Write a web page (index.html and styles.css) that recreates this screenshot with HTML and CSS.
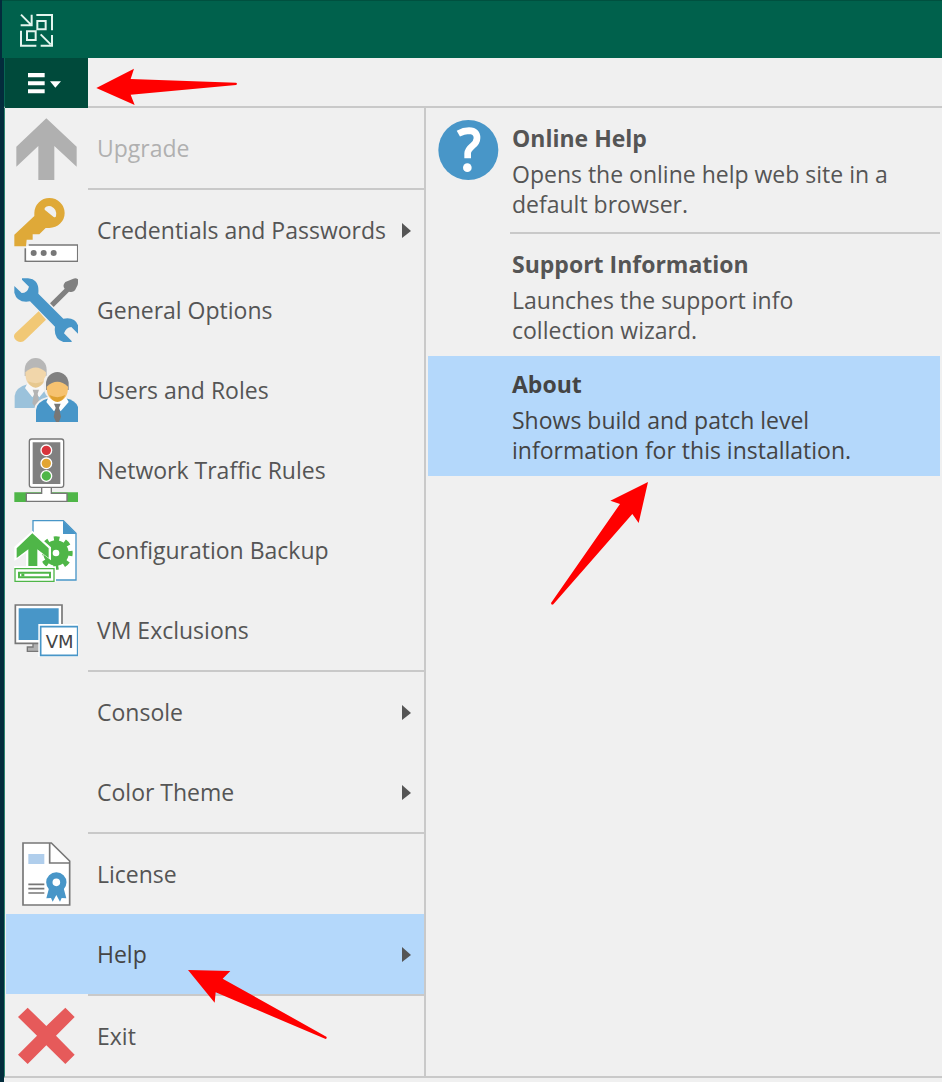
FILE: index.html
```html
<!DOCTYPE html>
<html lang="en">
<head>
  <meta charset="UTF-8">
  <meta name="viewport" content="width=device-width, initial-scale=1">
  <title>Main Menu</title>
  <link rel="stylesheet" href="styles.css">
</head>
<body>
  <div class="window">
    <header class="titlebar">
      <svg class="logo" viewBox="57 39 108 108" fill="none" stroke="#e4f5ee" stroke-width="6">
        <path d="M63 44L92 73M95 44V76H62M109 45H156V91M63 92V137H109M122 103L152 133M156 105V137H122"/>
        <path d="M112 63H137V88H112ZM81 94H107V120H81Z"/>
      </svg>
    </header>

    <div class="toolbar">
      <button class="menu-button" aria-label="Main menu">
        <svg viewBox="84 213 102 66" fill="#fff">
          <path d="M84 216H134V229H84ZM84 241H134V253H84ZM84 265H134V277H84ZM150 241H183L166 260Z"/>
        </svg>
      </button>
    </div>

    <div class="panels">
      <nav class="menu">
        <button class="item" disabled>
          <svg class="icon" viewBox="42 30 192 192"><path fill="#b0b0b0" d="M139 37L230 122V182L163 120V222H115V120L49 182V122Z"/></svg>
          <span class="label">Upgrade</span>
        </button>
        <hr>
        <button class="item">
          <svg class="icon" viewBox="42 276 192 192">
            <path fill="#dfa938" fill-rule="evenodd" d="M148 276A46 45 0 0 1 148 366H137L118 385H98V401H80L78 421H43V386L103 330V321A45 45 0 0 1 148 276ZM134 306Q141 298 153 301Q172 309 168 331Q166 336 160 332L134 311Z"/>
            <path fill="#fff" stroke="#777" stroke-width="5" d="M76 427V466H233V417H86"/>
            <path fill="#fff" d="M80 420H230V463H80Z"/>
            <g fill="#777"><circle cx="101" cy="441" r="9"/><circle cx="131" cy="441" r="9"/><circle cx="161" cy="441" r="9"/></g>
          </svg>
          <span class="label">Credentials and Passwords</span>
          <svg class="caret" viewBox="0 0 9 16"><path d="M0 1L9 9L0 16Z"/></svg>
        </button>
        <button class="item">
          <svg class="icon" viewBox="42 24 192 192">
            <path fill="#808080" d="M220 26Q229 23 236 29L233 45L225 61Q218 69 207 65L161 111L150 100L194 56Q186 47 196 36Z"/>
            <path fill="#f1c875" d="M116 124L138 149L76 209Q63 222 48 211Q37 200 46 190Z"/>
            <path fill="#4896c8" d="M66 25H84Q119 28 115 71L190 146Q228 139 236 172V193L214 171Q198 172 192 190L215 213V216H190Q160 207 165 170L90 94Q51 100 43 68V48L65 69Q82 69 87 50L66 29Z"/>
          </svg>
          <span class="label">General Options</span>
        </button>
        <button class="item">
          <svg class="icon" viewBox="42 264 192 192">
            <g opacity=".5">
              <path fill="#4896c8" d="M44 414V378Q47 352 83 343H130Q168 350 172 378V414Z"/>
              <path fill="#fff" d="M83 338L75 354L97 382L107 369L118 382L141 354L130 338Z"/>
              <path fill="#777" d="M98 359H117L113 371L118 400L107 413L97 400L102 371Z"/>
              <path fill="#808080" d="M74 299A33 35 0 0 1 140 299V318H74Z"/>
              <path fill="#f2bd66" d="M76 307Q107 278 138 307Q138 350 107 352Q76 350 76 307Z"/>
              <path fill="#dfa130" d="M83 334Q107 345 131 334Q121 353 107 353Q93 353 83 334Z"/>
            </g>
            <path fill="#f0f0f0" d="M103 457V416Q106 390 143 380Q125 365 133 325Q173 275 211 325Q218 365 202 380Q237 390 240 416V457Z"/>
            <path fill="#4896c8" d="M108 456V420Q111 394 147 385H197Q233 392 236 420V456Z"/>
            <path fill="#fff" d="M148 376L139 396L162 424L172 411L182 424L206 396L195 376Z"/>
            <path fill="#777" d="M162 401H182L177 413L183 440L177 456H168L161 440L167 413Z"/>
            <path fill="#808080" d="M138 342A34 36 0 0 1 206 342V360H138Z"/>
            <path fill="#f6c270" d="M140 350Q172 320 204 350Q204 392 172 394Q140 392 140 350Z"/>
            <path fill="#dfa130" d="M148 375Q172 388 196 375Q187 396 172 396Q157 396 148 375Z"/>
          </svg>
          <span class="label">Users and Roles</span>
        </button>
        <button class="item">
          <svg class="icon" viewBox="42 24 192 192">
            <path fill="#4fb648" d="M43 187H236V216H43Z"/>
            <path fill="#fff" stroke="#777" stroke-width="4" d="M79 190H125V172H154V190H201V214H79Z"/>
            <rect x="88" y="27" width="103" height="145" rx="7" fill="#fff" stroke="#777" stroke-width="4"/>
            <path fill="#808080" d="M98 37H181V162H98Z"/>
            <g stroke="#fff" stroke-width="4">
              <circle cx="139" cy="61" r="16" fill="#d8343c"/><circle cx="139" cy="100" r="16" fill="#e2a532"/><circle cx="139" cy="138" r="16" fill="#4fb648"/>
            </g>
          </svg>
          <span class="label">Network Traffic Rules</span>
        </button>
        <button class="item">
          <svg class="icon" viewBox="42 264 192 192">
            <path fill="#fff" stroke="#4896c8" stroke-width="4" d="M99 450V272H190L228 310V450Z"/>
            <path fill="#4896c8" d="M189 272V312H229Z"/>
            <circle cx="168" cy="369" r="24" fill="none" stroke="#4fb648" stroke-width="28"/>
            <circle cx="168" cy="369" r="43" fill="none" stroke="#4fb648" stroke-width="14" stroke-dasharray="16.8 17" stroke-dashoffset="8"/>
            <path fill="#fff" d="M97 302L153 352V391L127 371V409H168V461H42V409H78V369L43 393V350Z"/>
            <path fill="#4fb648" d="M97 310L146 355V384L112 358V408H85V358L50 384V355Z"/>
            <path fill="#fff" stroke="#4fb648" stroke-width="4" d="M45 416H162V454H45Z"/>
            <path fill="none" stroke="#4fb648" stroke-width="6" d="M57 428H150V442H57Z"/>
            <path fill="#4fb648" d="M64 431H73V439H64Z"/>
          </svg>
          <span class="label">Configuration Backup</span>
        </button>
        <button class="item">
          <svg class="icon" viewBox="42 24 192 192">
            <path fill="#b0b0b0" stroke="#777" stroke-width="4" d="M99 160V171H82V184H140V160Z"/>
            <path fill="#fff" stroke="#777" stroke-width="5" d="M46 45H186V160H46Z"/>
            <path fill="#4896c8" d="M56 55H176V150H56Z"/>
            <path fill="#fff" d="M115 102H236V200H115Z"/>
            <path fill="#fff" stroke="#4896c8" stroke-width="5" d="M122 110H233V196H122Z"/>
            <text class="vm" x="179" y="173">VM</text>
          </svg>
          <span class="label">VM Exclusions</span>
        </button>
        <hr>
        <button class="item">
          <span class="icon"></span>
          <span class="label">Console</span>
          <svg class="caret" viewBox="0 0 9 16"><path d="M0 1L9 9L0 16Z"/></svg>
        </button>
        <button class="item">
          <span class="icon"></span>
          <span class="label">Color Theme</span>
          <svg class="caret" viewBox="0 0 9 16"><path d="M0 1L9 9L0 16Z"/></svg>
        </button>
        <hr>
        <button class="item">
          <svg class="icon" viewBox="42 36 192 192">
            <path fill="#fff" stroke="#777" stroke-width="5" d="M69 39H154L209 93V225H69Z"/>
            <path fill="none" stroke="#777" stroke-width="5" d="M149 39V99H209"/>
            <path fill="#b0ceec" d="M85 72H133V102H85Z"/>
            <path stroke="#777" stroke-width="5" d="M85 163H133M85 176H133M85 189H133"/>
            <path fill="#4896c8" d="M147 175L139 205L153 204L158 215L169 195L180 215L185 204L199 205L191 175Z"/>
            <circle cx="169" cy="157" r="21" fill="#fff" stroke="#4896c8" stroke-width="19"/>
          </svg>
          <span class="label">License</span>
        </button>
        <button class="item active">
          <span class="icon"></span>
          <span class="label">Help</span>
          <svg class="caret" viewBox="0 0 9 16"><path d="M0 1L9 9L0 16Z"/></svg>
        </button>
        <hr>
        <button class="item">
          <svg class="icon" viewBox="42 522 192 192"><path fill="#e65a5a" d="M83 533L139 588L196 533L224 561L168 617L224 674L196 702L139 646L83 702L54 674L111 617L54 561Z"/></svg>
          <span class="label">Exit</span>
        </button>
      </nav>

      <section class="submenu">
        <button class="entry">
          <svg class="icon" viewBox="48 54 192 192">
            <circle cx="145" cy="150" r="90" fill="#4896c8"/>
            <path fill="none" stroke="#fff" stroke-width="20" d="M115 101Q131 92 147 92Q171 93 171 114Q171 127 157 138Q143 150 143 160V175"/>
            <circle cx="142" cy="203" r="13" fill="#fff"/>
          </svg>
          <span class="copy"><b>Online Help</b><span>Opens the online help web site in a default browser.</span></span>
        </button>
        <hr>
        <button class="entry">
          <span class="icon"></span>
          <span class="copy"><b>Support Information</b><span>Launches the support info collection wizard.</span></span>
        </button>
        <button class="entry active">
          <span class="icon"></span>
          <span class="copy"><b>About</b><span>Shows build and patch level information for this installation.</span></span>
        </button>
      </section>
    </div>

    <!-- callout arrows over the menu -->
    <svg class="arrow arrow-menu" viewBox="288 204 426 114"><path d="M289 264L402 206L392 237L708 248Q714 251 708 255L392 284L404 315Z"/></svg>
    <svg class="arrow arrow-help" viewBox="54 57 420 216"><path d="M54 60L181 63L158 86L469 260Q472 265 467 267L137 127L134 158Z"/></svg>
    <svg class="arrow arrow-about" viewBox="60 30 300 384"><path d="M354 36L326 159L307 132L70 403Q64 407 63 399L270 102L241 92Z"/></svg>
  </div>
</body>
</html>
```
FILE: styles.css
```css
* { box-sizing: border-box; }
body { margin: 0; background: #f0f0f0; color: #555; font-family: "Open Sans", "Noto Sans", sans-serif; font-size: 23px; }
button { border: 0; padding: 0; background: none; color: inherit; font: inherit; text-align: left; }
hr { height: 2px; margin: 0; border: 0; background: #c9c9c9; }
svg { display: block; }

.window { position: relative; min-height: 100vh; border-left: 4px solid #032c3c; }
.titlebar { height: 58px; margin-left: -2px; padding: 12px 17px; border-top: 1px solid #00503f; background: #00614c; }
.logo { width: 36px; height: 36px; }
.toolbar { display: flex; height: 50px; border-left: 1px solid #0a6653; border-bottom: 2px solid #c9c9c9; }
.menu-button { width: 83px; height: 50px; padding-left: 23px; background: #004a3b; }
.menu-button svg { width: 34px; height: 22px; }

.panels { display: flex; border-left: 1px solid #2d8571; border-bottom: 2px solid #c9c9c9; }
.menu { flex: none; width: 421px; padding-left: 1px; border-right: 2px solid #c9c9c9; }
.menu hr { margin-left: 82px; }
.item { display: flex; align-items: center; width: 100%; height: 80px; padding: 0 13px 0 8px; }
.item:disabled { color: #b0b0b0; }
.icon { flex: none; width: 64px; height: 64px; }
.label { flex: 1; margin-left: 19px; line-height: 30px; padding-bottom: 1px; }
.caret { width: 9px; height: 16px; fill: #555; }
.active { background: #b4d8fb; color: #444; }
.vm { fill: #444; font-family: "DejaVu Sans", sans-serif; font-size: 54px; text-anchor: middle; }

.submenu { flex: 1; padding: 2px 2px 0; }
.submenu hr { margin: 2px 0 2px 82px; }
.entry { display: flex; width: 100%; min-height: 120px; padding: 8px; }
.copy { max-width: 384px; margin-left: 12px; padding-top: 3px; line-height: 30px; }
.copy b { display: block; margin-bottom: 4px; line-height: 34px; }

.arrow { position: absolute; fill: #f00; }
.arrow-menu { left: 92px; top: 68px; width: 142px; height: 38px; }
.arrow-help { left: 184px; top: 969px; width: 140px; height: 72px; }
.arrow-about { left: 546px; top: 480px; width: 100px; height: 128px; }
```
